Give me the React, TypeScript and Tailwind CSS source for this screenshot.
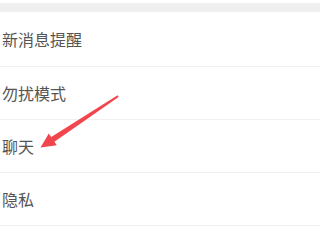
const items = ['新消息提醒', '勿扰模式', '聊天', '隐私'];

export default function App() {
  return (
    <div
      className="relative w-[320px] h-[240px] overflow-hidden bg-white"
      style={{ fontFamily: '"Noto Sans CJK SC", "Noto Sans", sans-serif' }}
    >
      <div className="h-[3px] bg-white" />
      <div className="h-[9px] bg-[#efefef]" />
      <div className="flex flex-col">
        {items.map((label, i) => (
          <div
            key={label}
            className={`flex items-center box-border border-b border-[#f1f1f1] pl-[2px] ${
              i === 0 ? 'h-[55px]' : 'h-[53px]'
            }`}
          >
            <span className="text-[16px] leading-none text-[#555555]">{label}</span>
          </div>
        ))}
      </div>

      {/* annotation arrow */}
      <svg className="absolute left-0 top-0" width="320" height="240" viewBox="0 0 320 240">
        <polygon
          points="118.6,96.9 54.4,141.7 56.8,145.2 40.5,147.5 48.8,133.5 51.2,137.1 117.6,95.3"
          fill="#f2464e"
        />
      </svg>
    </div>
  );
}
